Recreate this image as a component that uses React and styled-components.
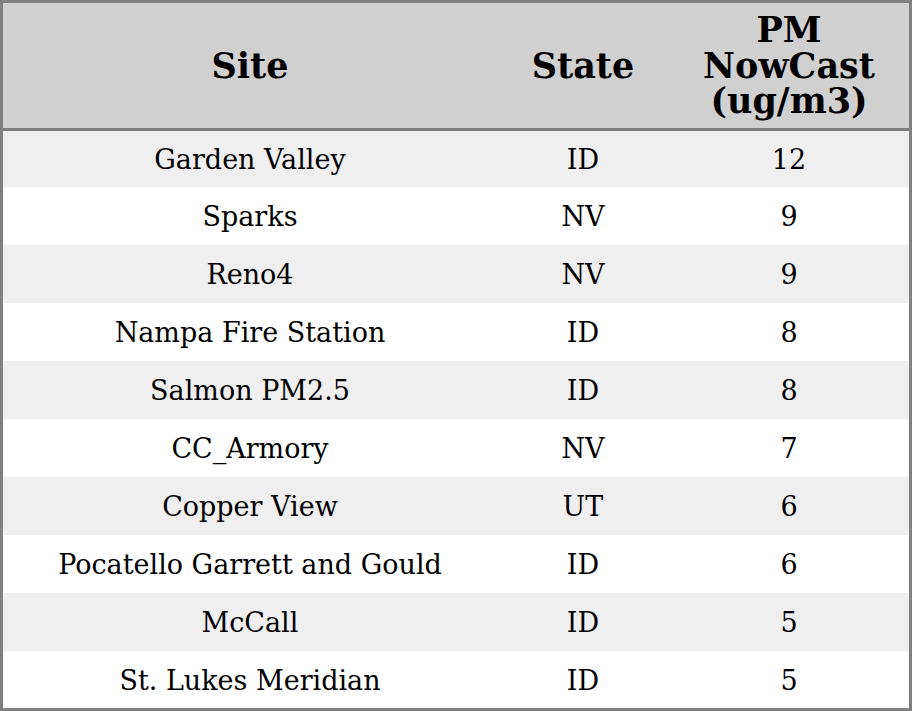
import React from "react"
import styled, { createGlobalStyle } from "styled-components"

const GlobalStyle = createGlobalStyle`
  html, body {
    margin: 0;
    padding: 0;
    background: #ffffff;
  }
`

const Frame = styled.div`
  box-sizing: border-box;
  width: 912px;
  height: 711px;
  border: 3px solid #808080;
  overflow: hidden;
  font-family: "DejaVu Serif", serif;
  color: #000;
`

const Table = styled.table`
  width: 100%;
  table-layout: fixed;
  border-collapse: collapse;
  border-spacing: 0;
`

const HeadCell = styled.th`
  box-sizing: border-box;
  height: 126px;
  padding: 0;
  background: #d0d0d0;
  border-bottom: 3px solid #808080;
  font-size: 35px;
  font-weight: bold;
  line-height: 35.5px;
  text-align: center;
  vertical-align: middle;
`

const Row = styled.tr`
  background: ${props => (props.$striped ? "#efefef" : "#ffffff")};
`

const Cell = styled.td`
  box-sizing: border-box;
  height: 58px;
  padding: 2px 0 0;
  font-size: 27px;
  line-height: 32px;
  text-align: center;
  vertical-align: middle;
  white-space: nowrap;
`

const rows = [
  ["Garden Valley", "ID", "12"],
  ["Sparks", "NV", "9"],
  ["Reno4", "NV", "9"],
  ["Nampa Fire Station", "ID", "8"],
  ["Salmon PM2.5", "ID", "8"],
  ["CC_Armory", "NV", "7"],
  ["Copper View", "UT", "6"],
  ["Pocatello Garrett and Gould", "ID", "6"],
  ["McCall", "ID", "5"],
  ["St. Lukes Meridian", "ID", "5"],
]

const App = () => (
  <>
    <GlobalStyle />
    <Frame>
      <Table>
        <colgroup>
          <col style={{ width: "494px" }} />
          <col style={{ width: "172px" }} />
          <col style={{ width: "240px" }} />
        </colgroup>
        <thead>
          <tr>
            <HeadCell>Site</HeadCell>
            <HeadCell>State</HeadCell>
            <HeadCell>
              PM
              <br />
              NowCast
              <br />
              (ug/m3)
            </HeadCell>
          </tr>
        </thead>
        <tbody>
          {rows.map((r, i) => (
            <Row key={r[0]} $striped={i % 2 === 0}>
              <Cell>{r[0]}</Cell>
              <Cell>{r[1]}</Cell>
              <Cell>{r[2]}</Cell>
            </Row>
          ))}
        </tbody>
      </Table>
    </Frame>
  </>
)

export default App
